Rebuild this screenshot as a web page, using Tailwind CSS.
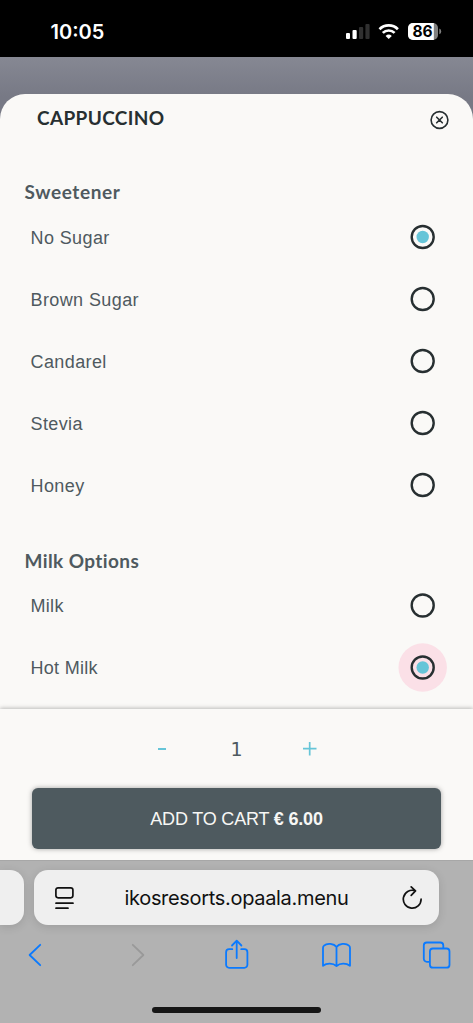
<!DOCTYPE html>
<html lang="en">
<head>
<meta charset="utf-8">
<meta name="viewport" content="width=device-width, initial-scale=1">
<title>Cappuccino</title>
<script src="https://cdn.jsdelivr.net/npm/@tailwindcss/browser@4"></script>
</head>
<body class="w-[473px] h-[1023px] overflow-hidden bg-black font-['Liberation_Sans',sans-serif]">
<div class="flex flex-col h-[1023px] w-[473px]">
  <!-- Status bar -->
  <header class="h-[57px] shrink-0 bg-black text-white flex justify-between pt-[20px] pl-[50.5px] pr-[31px]">
    <span class="font-['Inter',sans-serif] font-semibold text-[20px] leading-6">10:05</span>
    <svg class="mt-[2px]" width="97" height="20" viewBox="345 22 97 20">
      <g fill="#fff"><rect x="346" y="33" width="4" height="6" rx="1"/><rect x="352.5" y="30" width="4.2" height="9" rx="1"/></g>
      <g fill="#303030"><rect x="359" y="27" width="4.2" height="12" rx="1"/><rect x="365.4" y="24" width="4.2" height="15" rx="1"/></g>
      <g fill="none" stroke="#fff" stroke-width="2.7"><path d="M379.5 29.2a13 13 0 0 1 18.4 0"/><path d="M382.8 32.9a8.4 8.4 0 0 1 11.8 0"/></g>
      <path fill="#fff" d="M388.7 39l-3.1-3.1a4.5 4.5 0 0 1 6.2 0z"/>
      <rect x="408" y="23" width="30" height="17" rx="5" fill="#808080"/>
      <path d="M413 23h20.8v17H413a5 5 0 0 1-5-5v-7a5 5 0 0 1 5-5z" fill="#fff"/>
      <path d="M439.3 28.6a3 3 0 0 1 0 5.6z" fill="#808080"/>
      <text x="412.5" y="37.2" font-family="Inter, sans-serif" font-size="15.5" font-weight="700" textLength="20" fill="#000">86</text>
    </svg>
  </header>

  <!-- Dimmed page behind the sheet -->
  <div class="h-[803px] shrink-0 bg-linear-to-b from-[#868893] from-0% to-[#777985] to-[40px] pt-[36.5px] flex flex-col">
    <section class="flex-1 rounded-t-[25px] bg-[#faf9f7] flex flex-col overflow-hidden">
      <div class="h-[67px] shrink-0 flex justify-between pl-[37px] pr-[24px]">
        <h1 class="mt-[12px] font-['Lato',sans-serif] font-bold text-[19px] tracking-[0.35px] leading-6 text-[#272f31]">CAPPUCCINO</h1>
        <svg class="mt-[16.5px]" width="20" height="20" viewBox="0 0 20 20" fill="none" stroke="#272f31" stroke-width="1.6" stroke-linecap="round"><circle cx="10.5" cy="10" r="8.4"/><path d="M7.7 7.2l5.6 5.6M13.3 7.2l-5.6 5.6"/></svg>
      </div>
      <div class="flex-1 overflow-hidden text-[#4f5a5f]">
        <h2 class="h-[45px] pt-[19px] pl-[24.5px] font-['Lato',sans-serif] font-bold text-[19px] tracking-[0.6px] leading-6">Sweetener</h2>
        <ul class="text-[18px] tracking-[0.4px]">
          <li class="h-[62px] flex items-center justify-between pl-[30.5px] pr-[26px]"><span class="pt-[3px]">No Sugar</span><svg width="49" height="49" viewBox="0 0 49 49"><circle cx="24.7" cy="25" r="11" fill="none" stroke="#272f31" stroke-width="2.4"/><circle cx="24.7" cy="25" r="6.2" fill="#66c5d8"/></svg></li>
          <li class="h-[62px] flex items-center justify-between pl-[30.5px] pr-[26px]"><span class="pt-[3px]">Brown Sugar</span><svg width="49" height="49" viewBox="0 0 49 49"><circle cx="24.7" cy="25" r="11" fill="none" stroke="#272f31" stroke-width="2.4"/></svg></li>
          <li class="h-[62px] flex items-center justify-between pl-[30.5px] pr-[26px]"><span class="pt-[3px]">Candarel</span><svg width="49" height="49" viewBox="0 0 49 49"><circle cx="24.7" cy="25" r="11" fill="none" stroke="#272f31" stroke-width="2.4"/></svg></li>
          <li class="h-[62px] flex items-center justify-between pl-[30.5px] pr-[26px]"><span class="pt-[3px]">Stevia</span><svg width="49" height="49" viewBox="0 0 49 49"><circle cx="24.7" cy="25" r="11" fill="none" stroke="#272f31" stroke-width="2.4"/></svg></li>
          <li class="h-[62px] flex items-center justify-between pl-[30.5px] pr-[26px]"><span class="pt-[3px]">Honey</span><svg width="49" height="49" viewBox="0 0 49 49"><circle cx="24.7" cy="25" r="11" fill="none" stroke="#272f31" stroke-width="2.4"/></svg></li>
        </ul>
        <h2 class="h-[59px] pt-[33px] pl-[24.5px] font-['Lato',sans-serif] font-bold text-[19px] tracking-[0.4px] leading-6">Milk Options</h2>
        <ul class="text-[18px] tracking-[0.3px]">
          <li class="h-[62px] flex items-center justify-between pl-[30.5px] pr-[26px]"><span class="pt-[2px]">Milk</span><svg width="49" height="49" viewBox="0 0 49 49"><circle cx="24.7" cy="24.5" r="11" fill="none" stroke="#272f31" stroke-width="2.4"/></svg></li>
          <li class="h-[62px] flex items-center justify-between pl-[30.5px] pr-[26px]"><span class="pt-[2px]">Hot Milk</span><svg width="49" height="49" viewBox="0 0 49 49"><circle cx="24.7" cy="24.5" r="24.2" fill="#fbe0e7"/><circle cx="24.7" cy="24.5" r="11" fill="none" stroke="#272f31" stroke-width="2.4"/><circle cx="24.7" cy="24.5" r="6.2" fill="#66c5d8"/></svg></li>
        </ul>
      </div>
      <footer class="h-[151px] shrink-0 bg-[#faf9f7] shadow-[0_-1px_4px_rgba(0,0,0,0.25)] flex flex-col items-center">
        <div class="h-[79px] w-full pt-[28px] pr-[1px] flex justify-center text-[#4f5a5f]">
          <svg width="20" height="24" viewBox="152 737 20 24"><path d="M158 749h8" stroke="#66c5d8" stroke-width="2"/></svg>
          <span class="w-[128px] pl-px text-center font-['DejaVu_Sans',sans-serif] text-[19px] leading-6">1</span>
          <svg width="20" height="24" viewBox="300.5 737 20 24"><path d="M303.5 748.7h13.5M310.2 742v13.5" stroke="#66c5d8" stroke-width="1.7"/></svg>
        </div>
        <button class="h-[60.5px] w-[409px] pt-[2px] rounded-[6px] bg-[#4e5a5f] text-[#f7f7f5] text-[18px] tracking-[-0.18px] shadow-[0_0_5px_rgba(0,0,0,0.35)]">ADD TO CART <b>€ 6.00</b></button>
      </footer>
    </section>
  </div>

  <!-- Browser toolbar -->
  <nav class="h-[163px] shrink-0 bg-[#b2b2b2] border-t border-[#a7a7a7] flex flex-col">
    <div class="mt-[9px] h-[55px] flex gap-[10px]">
      <div class="w-[24px] rounded-r-[14px] bg-[#efefef] shadow-[0_2px_10px_rgba(0,0,0,0.12)]"></div>
      <div class="w-[405px] rounded-[14px] bg-[#efefef] shadow-[0_2px_10px_rgba(0,0,0,0.12)] flex items-center justify-between pl-[20px] pr-[16px]">
        <svg width="21" height="24" viewBox="0 0 21 24" fill="none" stroke="#111" stroke-width="1.7" stroke-linecap="round"><rect x="1.9" y="1.8" width="17" height="10" rx="2.2"/><path d="M2 17.2h17M2 22.2h12"/></svg>
        <span class="pr-[3px] font-['Inter',sans-serif] text-[20px] tracking-[-0.32px] text-[#111]">ikosresorts.opaala.menu</span>
        <svg width="22" height="24" viewBox="0 0 22 24" fill="none" stroke="#111" stroke-width="1.7" stroke-linecap="round" stroke-linejoin="round"><path d="M13.9 4.7a8.9 8.9 0 1 0 6.2 8.500M10.200.9l4.300 4-4.300 4.400"/></svg>
      </div>
    </div>
    <svg width="473" height="60" viewBox="0 925 473 60" fill="none" stroke="#0a7aff" stroke-width="1.8" stroke-linecap="round" stroke-linejoin="round">
      <path d="M40.2 944.8L29.6 955l10.6 10.2"/>
      <path d="M132.8 944.8l10.6 10.2-10.6 10.2" stroke="#999"/>
      <path d="M232.3 949.2h-3.2a3 3 0 0 0-3 3v12.6a3 3 0 0 0 3 3h15.3a3 3 0 0 0 3-3v-12.6a3 3 0 0 0-3-3h-3.2M236.7 958v-17M232 945.5l4.7-4.8 4.7 4.8"/>
      <path d="M336.5 947c-2.5-3.6-9.5-4.2-12.5-1.4-.8.7-1 1.4-1 2.4v17.8c3.8-3.1 10-3 13.5.3 3.5-3.3 9.7-3.4 13.5-.3V948c0-1-.2-1.7-1-2.4-3-2.8-10-2.2-12.5 1.4zM336.5 947v19"/>
      <path d="M429.3 961.8h-2.500a3 3 0 0 1-3-3v-13.300a3 3 0 0 1 3-3h13.500a3 3 0 0 1 3 3v2.700"/><rect x="429.900" y="948.500" width="19.600" height="19.200" rx="3"/>
    </svg>
    <div class="mt-[22px] mx-auto h-[6px] w-[169px] rounded-full bg-[#161616]"></div>
  </nav>
</div>
</body>
</html>
